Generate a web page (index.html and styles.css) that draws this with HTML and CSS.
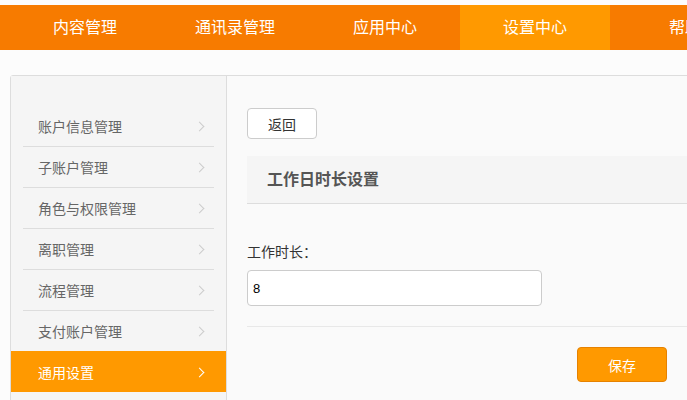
FILE: index.html
```html
<!DOCTYPE html>
<html lang="zh-CN">
<head>
  <meta charset="UTF-8">
  <title>设置中心</title>
  <link rel="stylesheet" href="styles.css">
</head>
<body>

  <div class="nav">
    <a class="nav-item" href="#">内容管理</a>
    <a class="nav-item" href="#">通讯录管理</a>
    <a class="nav-item" href="#">应用中心</a>
    <a class="nav-item active" href="#">设置中心</a>
    <a class="nav-item" href="#">帮助</a>
  </div>

  <div class="panel">
    <!-- 左侧菜单 -->
    <ul class="side">
      <li class="side-item"><a href="#"><span>账户信息管理</span><i class="arrow"></i></a></li>
      <li class="side-item"><a href="#"><span>子账户管理</span><i class="arrow"></i></a></li>
      <li class="side-item"><a href="#"><span>角色与权限管理</span><i class="arrow"></i></a></li>
      <li class="side-item"><a href="#"><span>离职管理</span><i class="arrow"></i></a></li>
      <li class="side-item"><a href="#"><span>流程管理</span><i class="arrow"></i></a></li>
      <li class="side-item"><a href="#"><span>支付账户管理</span><i class="arrow"></i></a></li>
      <li class="side-item active"><a href="#"><span>通用设置</span><i class="arrow"></i></a></li>
    </ul>

    <div class="main">
      <button class="back">返回</button>

      <div class="section-title">工作日时长设置</div>

      <div class="form">
        <label class="label" for="hours">工作时长：</label>
        <input class="input" id="hours" type="text" value="8">
      </div>

      <div class="footer">
        <button class="save">保存</button>
      </div>
    </div>
  </div>

</body>
</html>
```

FILE: styles.css
```css
* {
  box-sizing: border-box;
}

body {
  margin: 0;
  padding-top: 5px;
  font-family: "Liberation Sans", "Noto Sans CJK SC", sans-serif;
  font-size: 14px;
  background-color: #fcfcfc;
  color: #333;
  overflow: hidden;
}

a {
  text-decoration: none;
}

.nav {
  display: flex;
  height: 45px;
  padding-left: 10px;
  background-color: #f77b00;
}

.nav-item {
  flex: 0 0 150px;
  text-align: center;
  line-height: 45px;
  font-size: 16px;
  color: white;
}

.nav-item.active {
  background-color: #ff9900;
}

.panel {
  display: flex;
  width: 1180px;
  min-height: 400px;
  margin: 25px 0 0 10px;
  border: 1px solid #ddd;
  border-radius: 3px 0 0 0;
  background-color: #fafafa;
}

.side {
  flex: 0 0 216px;
  margin: 0;
  padding: 30px 0 0;
  list-style: none;
  background-color: #f5f5f5;
  border-right: 1px solid #ddd;
}

.side-item {
  padding: 0 12px;
}

.side-item a {
  box-sizing: content-box;
  display: flex;
  align-items: center;
  justify-content: space-between;
  height: 40px;
  padding: 0 9px 0 15px;
  color: #666;
}

.side-item + .side-item a {
  border-top: 1px solid #ddd;
}

.side-item.active {
  background-color: #ff9900;
}

.side-item.active a {
  color: white;
  border-top-color: transparent;
}

.arrow {
  width: 7px;
  height: 7px;
  margin-right: 2px;
  border-top: 1px solid #ccc;
  border-right: 1px solid #ccc;
  transform: rotate(45deg);
}

.side-item.active .arrow {
  border-color: white;
}

.main {
  flex: 1;
  padding: 32px 0 0 20px;
}

.back {
  display: block;
  width: 70px;
  height: 31px;
  font-family: inherit;
  font-size: 14px;
  color: #333;
  background-color: white;
  border: 1px solid #ccc;
  border-radius: 4px;
}

.section-title {
  margin-top: 17px;
  height: 48px;
  line-height: 47px;
  padding-left: 20px;
  font-size: 16px;
  font-weight: bold;
  color: #555;
  background-color: #f5f5f5;
  border-bottom: 1px solid #ddd;
}

.form {
  padding: 40px 0 20px;
  border-bottom: 1px solid #e8e8e8;
}

.label {
  display: block;
  line-height: 16px;
  margin-bottom: 10px;
  font-family: "Liberation Sans", "Noto Sans CJK TC", sans-serif;
}

.input {
  display: block;
  width: 295px;
  height: 36px;
  padding: 0 5px;
  font-family: "Liberation Sans", sans-serif;
  font-size: 13px;
  color: #000;
  background-color: white;
  border: 1px solid #ccc;
  border-radius: 4px;
}

.footer {
  padding: 20px 0 0 330px;
}

.save {
  width: 90px;
  height: 35px;
  font-family: inherit;
  font-size: 14px;
  color: white;
  background-color: #ff9900;
  border: 1px solid #e68200;
  border-radius: 4px;
}
```
